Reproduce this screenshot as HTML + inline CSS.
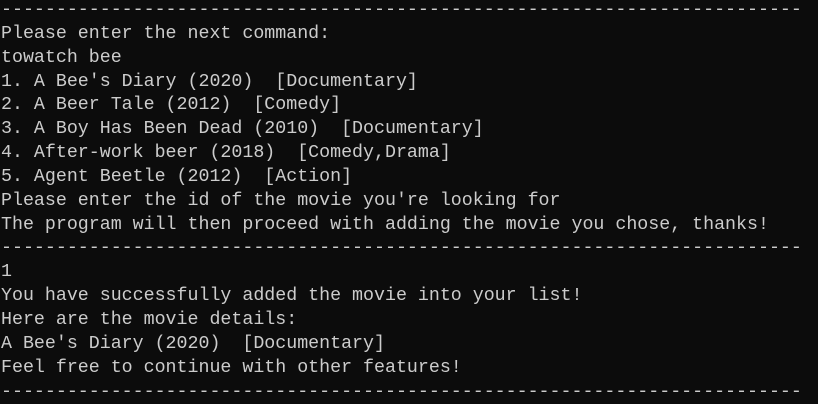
<!DOCTYPE html>
<html><head><style>
html,body{margin:0;padding:0;background:#0c0c0c;width:818px;height:403px;overflow:hidden}
pre{margin:0;position:absolute;left:1px;top:-1px;font-family:"Liberation Mono",monospace;font-size:18.3px;line-height:23.85px;color:#cccccc}
</style></head><body>
<pre>-------------------------------------------------------------------------
Please enter the next command:
towatch bee
1. A Bee's Diary (2020)  [Documentary]
2. A Beer Tale (2012)  [Comedy]
3. A Boy Has Been Dead (2010)  [Documentary]
4. After-work beer (2018)  [Comedy,Drama]
5. Agent Beetle (2012)  [Action]
Please enter the id of the movie you're looking for
The program will then proceed with adding the movie you chose, thanks!
-------------------------------------------------------------------------
1
You have successfully added the movie into your list!
Here are the movie details:
A Bee's Diary (2020)  [Documentary]
Feel free to continue with other features!
-------------------------------------------------------------------------</pre>
</body></html>
